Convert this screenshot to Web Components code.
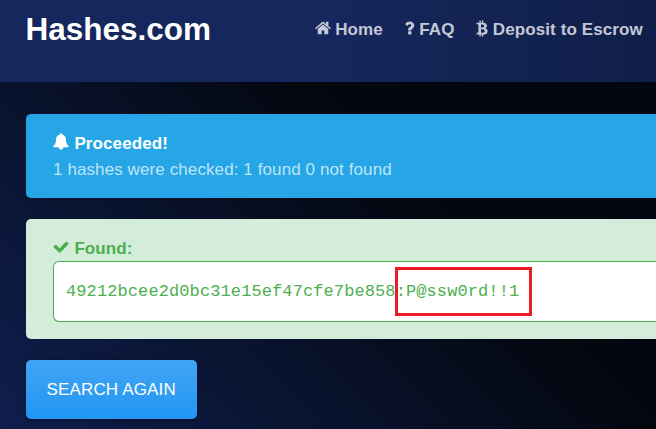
<!DOCTYPE html>
<html lang="en">
<head>
<meta charset="utf-8">
<title>Hashes.com</title>
<style>
html,body{margin:0;height:100%;overflow:hidden}
body{font:17px/26px "Liberation Sans",Arial,sans-serif;letter-spacing:.1px}
</style>
</head>
<body>
<hash-app></hash-app>
<script>
const define = (name, html) => {
  const t = document.createElement('template');
  t.innerHTML = html;
  customElements.define(name, class extends HTMLElement {
    constructor() {
      super();
      this.attachShadow({mode: 'open'}).append(t.content.cloneNode(true));
    }
  });
};

// Solid glyphs: [viewBox, path]; drawn at one pixel per unit.
const icons = {
  home: ['0 0 16 14', 'M8 3.600 2.700 8v4.700c0 .4.2.6.6.6h3.400V9.500h2.600v3.800h3.400c.4 0 .6-.2.6-.6V8ZM15.700 6.900 13.400 5V1.100c0-.2-.1-.3-.3-.3h-1.900c-.2 0-.3.1-.3.3v1.800L8.800 1.100a1.200 1.200 0 0 0-1.600 0L.3 6.900c-.2.1-.2.3-.1.5l.6.7c.1.2.3.2.5 0L8 2.600l6.700 5.500c.2.2.4.2.5 0l.6-.7c.1-.2.1-.4-.1-.5Z'],
  question: ['0 0 10 14', 'M3.500 10.300h2.600c.2 0 .4.2.4.4v2.400c0 .2-.2.4-.4.4H3.500c-.2 0-.4-.2-.4-.4v-2.400c0-.2.2-.4.4-.4ZM9.300 4.600c0 2-1.400 2.800-2.300 3.400-.5.3-.6.6-.6 1 0 .3-.2.5-.4.5H3.500c-.3 0-.4-.3-.4-.6v-.5c0-1.300 1.200-2.200 2-2.600.8-.4 1.200-.7 1.200-1.300 0-.7-.7-1.200-1.600-1.200-1 0-1.400.6-2.100 1.400-.1.2-.4.2-.6.1L.4 3.600C.2 3.500.1 3.200.3 3 1.300 1.300 2.800.5 4.900.5c2.100 0 4.400 1.700 4.400 4.100Z'],
  bitcoin: ['0 0 12 17', 'M10.900 5.300c.2 1.500-.5 2.400-1.600 2.900 1.500.4 2.500 1.300 2.300 3.200-.2 2.300-2 3-4.300 3.100v1.900H5.900v-1.900H4.800v1.900H3.400v-1.900H.5l.3-1.700h1c.5 0 .6-.3.6-.5V5c0-.5-.3-.7-.8-.7H.5V2.700h2.900V.4h1.400v2.300h1.100V.4h1.400v2.300c1.900.2 3.400.8 3.600 2.600ZM8.800 11c0-1.700-2.500-1.700-3.800-1.700v3.500c1.200 0 3.800.1 3.800-1.800ZM8.200 5.900c0-1.600-2.100-1.500-3.200-1.500v3c1.100 0 3.200.1 3.200-1.500Z'],
  bell: ['0 0 16 17', 'M8 .2c.7 0 1.100.5 1 1.200 2.300.5 3.900 2.300 3.900 4.600 0 3.500.8 5.700 2.900 7.100 0 .7-.4 1.200-1.100 1.200h-4.300A2.400 2.400 0 0 1 8 16.700a2.400 2.400 0 0 1-2.400-2.400H1.300c-.7 0-1.100-.5-1.100-1.200C2.300 11.700 3.100 9.500 3.100 6c0-2.300 1.600-4.100 3.900-4.600C6.900.7 7.300.2 8 .2Z'],
  check: ['0 0 16 12', 'M15.300 3.500 7.300 11.500c-.4.4-.9.4-1.300 0L.8 6.600c-.4-.4-.4-.9 0-1.300l1.300-1.200c.4-.4.9-.4 1.300 0l3.200 3.200L12.700 1c.4-.4.9-.4 1.300 0l1.300 1.200c.4.4.4.9 0 1.300Z']
};
customElements.define('glyph-icon', class extends HTMLElement {
  connectedCallback() {
    const [box, d] = icons[this.getAttribute('name')];
    const [, , w, h] = box.split(' ');
    const root = this.shadowRoot || this.attachShadow({mode: 'open'});
    root.innerHTML = `<style>:host{display:block;flex:none}svg{display:block}</style>
      <svg width="${w}" height="${h}" viewBox="${box}" fill="currentColor" aria-hidden="true"><path d="${d}"/></svg>`;
  }
});

define('nav-link', `<style>
:host{display:flex;align-items:flex-start;gap:4.700px;font-weight:700;color:#c4c8d5;white-space:nowrap}
::slotted(glyph-icon){margin-top:var(--icon-top,4px)}
</style><slot name="icon"></slot><span><slot></slot></span>`);

define('site-header', `<style>
:host{display:flex;box-sizing:border-box;height:82px;padding:8px 0 0 25.500px;background:linear-gradient(90deg,#15275d 0,#15275c 50%,#101f49 100%)}
.brand{width:289px;flex:none;font-size:31.500px;letter-spacing:0;line-height:42px;font-weight:700;color:#fff}
nav{display:flex;gap:21.700px;padding-top:9px;height:26px}
</style><div class="brand"><slot name="brand"></slot></div><nav><slot></slot></nav>`);

define('alert-box', `<style>
:host{display:block;box-sizing:border-box;margin-left:26px;padding:17px 0 0 27px;border-radius:5px 0 0 5px;background:var(--bg);color:var(--fg)}
.title{display:flex;gap:5.400px;font-weight:700;color:var(--title)}
::slotted(glyph-icon){margin-top:var(--icon-top,4px)}
</style><div class="title"><slot name="icon"></slot><span><slot name="title"></slot></span></div><slot></slot>`);

define('hash-result', `<style>
:host{display:flex;align-items:center;box-sizing:border-box;height:61px;margin-top:-1px;border:1px solid #4caf50;border-right:0;border-radius:6px 0 0 6px;background:#fff;padding-left:12px;color:#4caf50;font:17px/26px "Liberation Mono","Courier New",monospace}
.mark{position:relative}
.mark::after{content:"";position:absolute;left:-1px;top:-12px;width:131px;height:43px;border:3px solid #ed1c24}
</style><slot></slot><span class="mark"><slot name="plain"></slot></span>`);

define('action-button', `<style>
:host{display:flex;align-items:center;box-sizing:border-box;width:171px;height:59px;margin-left:26px;padding-left:20.500px;border-radius:5px;background:linear-gradient(#42a5f5,#2196f3);box-shadow:0 1px 4px rgba(0,0,0,.4);color:#fff;white-space:nowrap;letter-spacing:.15px}
</style><slot></slot>`);

define('hash-app', `<style>
:host{display:block;height:429px;background:linear-gradient(45deg,#0f1e4d 0,#08122b 34%,#030710 59%,#03050f 100%)}
main{display:flex;flex-direction:column;align-items:stretch;gap:21px;padding-top:32px}
.info{--bg:#26a6e6;--fg:#bee4f8;--title:#fff;--icon-top:2px;height:84px}
.ok{--bg:#d4edda;--fg:#4caf50;--title:#4caf50;--icon-top:5px;height:120px}
action-button{align-self:flex-start}
</style>
<site-header>
  <span slot="brand">Hashes.com</span>
  <nav-link><glyph-icon slot="icon" name="home"></glyph-icon>Home</nav-link>
  <nav-link><glyph-icon slot="icon" name="question"></glyph-icon>FAQ</nav-link>
  <nav-link style="--icon-top:3px"><glyph-icon slot="icon" name="bitcoin"></glyph-icon>Deposit to Escrow</nav-link>
</site-header>
<main>
  <alert-box class="info"><glyph-icon slot="icon" name="bell"></glyph-icon><span slot="title">Proceeded!</span>1 hashes were checked: 1 found 0 not found</alert-box>
  <alert-box class="ok"><glyph-icon slot="icon" name="check"></glyph-icon><span slot="title">Found:</span><hash-result>49212bcee2d0bc31e15ef47cfe7be858<span slot="plain">:P@ssw0rd!!1</span></hash-result></alert-box>
  <action-button>SEARCH AGAIN</action-button>
</main>`);
</script>
</body>
</html>
